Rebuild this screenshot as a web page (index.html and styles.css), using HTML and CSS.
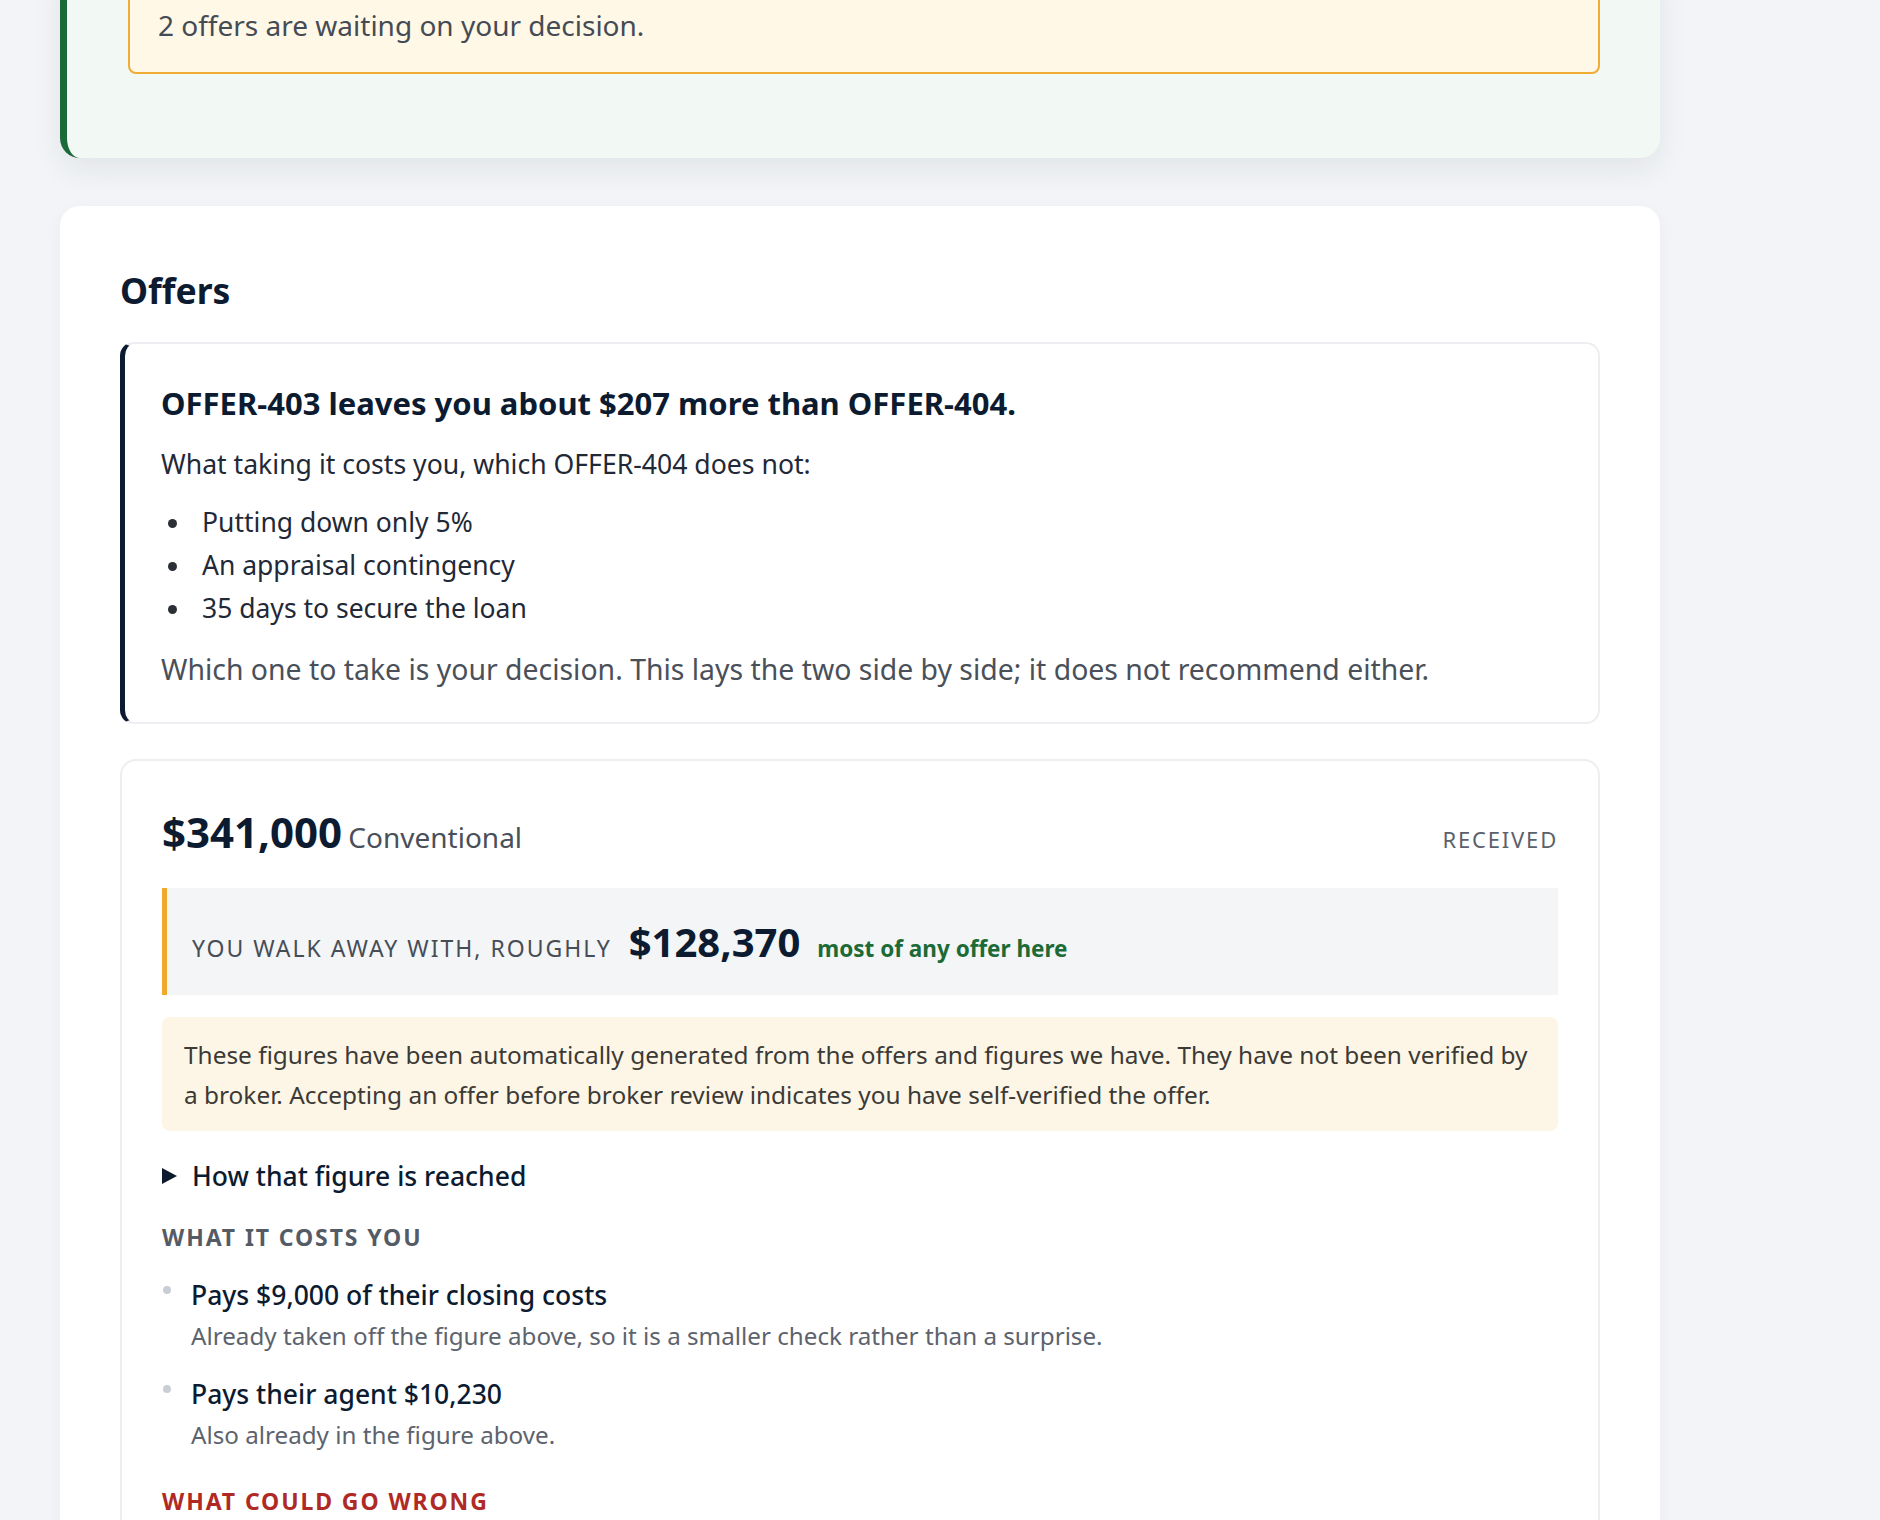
FILE: index.html
```html
<!DOCTYPE html>
<html lang="en">
<head>
<meta charset="utf-8">
<title>Offers</title>
<link rel="stylesheet" href="styles.css">
</head>
<body>
<main class="page">
  <section class="status-card">
    <div class="notice">2 offers are waiting on your decision.</div>
  </section>

  <section class="panel">
    <h2 class="panel-title">Offers</h2>

    <div class="summary">
      <h3 class="summary-head">OFFER-403 leaves you about $207 more than OFFER-404.</h3>
      <p class="summary-lead">What taking it costs you, which OFFER-404 does not:</p>
      <ul class="summary-list">
        <li>Putting down only 5%</li>
        <li>An appraisal contingency</li>
        <li>35 days to secure the loan</li>
      </ul>
      <p class="summary-note">Which one to take is your decision. This lays the two side by side; it does not recommend either.</p>
    </div>

    <article class="offer">
      <header class="offer-head">
        <div class="offer-price"><span class="price">$341,000</span> <span class="loan">Conventional</span></div>
        <span class="offer-status">RECEIVED</span>
      </header>

      <div class="net">
        <span class="net-label">YOU WALK AWAY WITH, ROUGHLY</span>
        <span class="net-value">$128,370</span>
        <span class="net-tag">most of any offer here</span>
      </div>

      <p class="disclaimer">These figures have been automatically generated from the offers and figures we have. They have not been verified by a broker. Accepting an offer before broker review indicates you have self-verified the offer.</p>

      <details class="breakdown">
        <summary>How that figure is reached</summary>
      </details>

      <h4 class="group-title">WHAT IT COSTS YOU</h4>
      <ul class="terms">
        <li>
          <div class="term-title">Pays $9,000 of their closing costs</div>
          <div class="term-note">Already taken off the figure above, so it is a smaller check rather than a surprise.</div>
        </li>
        <li>
          <div class="term-title">Pays their agent $10,230</div>
          <div class="term-note">Also already in the figure above.</div>
        </li>
      </ul>

      <h4 class="group-title risk">WHAT COULD GO WRONG</h4>
    </article>
  </section>
</main>
</body>
</html>
```

FILE: styles.css
```css
* { box-sizing: border-box; }

html, body {
  margin: 0;
  background: #f2f4f7;
}

body {
  font-family: "Noto Sans", "Open Sans", Arial, sans-serif;
  color: #1f2937;
}

.page {
  width: 1600px;
  margin: -43px 0 0 60px;
  display: flex;
  flex-direction: column;
  gap: 48px;
  padding-bottom: 80px;
}

/* status card at the top */
.status-card {
  background: #f2f8f4;
  border-left: 7px solid #1b6a37;
  border-radius: 20px;
  padding: 22px 60px 84px 61px;
  box-shadow: 0 12px 30px rgba(30, 40, 60, 0.07);
}

.notice {
  background: #fff8e7;
  border: 2px solid #f0ac35;
  border-radius: 8px;
  padding: 24px 28px 27px;
  font-size: 28px;
  line-height: 40px;
  color: #454b55;
}

/* offers panel */
.panel {
  background: #ffffff;
  border-radius: 20px;
  padding: 64px 60px 0;
  box-shadow: 0 4px 18px rgba(30, 40, 60, 0.04);
}

.panel-title {
  margin: 0 0 32px;
  font-size: 35.5px;
  line-height: 40px;
  font-weight: 700;
  color: #0c1b30;
}

.summary {
  border: 2px solid #eceef1;
  border-left: 5px solid #0c1b30;
  border-radius: 14px;
  padding: 40px 36px 33px;
}

.summary-head {
  margin: 0;
  font-size: 31px;
  line-height: 38px;
  font-weight: 700;
  color: #0c1b30;
}

.summary-lead {
  margin: 23px 0 0;
  font-size: 26.6px;
  line-height: 38px;
  color: #1f2937;
}

.summary-list {
  list-style: none;
  margin: 18px 0 0;
  padding: 0;
  font-size: 26.5px;
  line-height: 43px;
  color: #1f2937;
}

.summary-list li {
  position: relative;
  padding-left: 41px;
}

.summary-list li::before {
  content: "";
  position: absolute;
  left: 7px;
  top: 18px;
  width: 9px;
  height: 9px;
  border-radius: 50%;
  background: #2b2f36;
}

.summary-note {
  margin: 19px 0 0;
  font-size: 28.4px;
  line-height: 40px;
  color: #4a505a;
}

/* individual offer */
.offer {
  margin-top: 35px;
  border: 2px solid #eceef1;
  border-bottom: none;
  border-radius: 16px 16px 0 0;
  padding: 46px 40px 40px;
}

.offer-head {
  display: flex;
  align-items: baseline;
  justify-content: space-between;
}

.price {
  font-size: 42px;
  line-height: 50px;
  font-weight: 700;
  color: #0c1b30;
}

.loan {
  font-size: 28px;
  color: #4a505a;
  margin-left: 2px;
}

.offer-status {
  font-size: 22px;
  letter-spacing: 1.8px;
  color: #5b616b;
}

.net {
  margin-top: 31px;
  background: #f3f5f7;
  border-left: 5px solid #f0a92e;
  padding: 30px 25px 29px;
  display: flex;
  align-items: baseline;
  gap: 17px;
}

.net-label {
  font-size: 23px;
  letter-spacing: 2px;
  color: #474d57;
}

.net-value {
  font-size: 40px;
  line-height: 48px;
  font-weight: 700;
  color: #0c1b30;
}

.net-tag {
  font-size: 22.5px;
  font-weight: 700;
  color: #1c6b36;
}

.disclaimer {
  margin: 22px 0 0;
  background: #fdf6e6;
  border-radius: 8px;
  padding: 18px 24px 16px 22px;
  font-size: 24.4px;
  line-height: 40px;
  color: #3b3a36;
}

.breakdown {
  margin-top: 27px;
}

.breakdown summary {
  list-style: none;
  display: flex;
  align-items: center;
  gap: 15px;
  font-size: 26.5px;
  line-height: 36px;
  font-weight: 500;
  color: #0c1b30;
  cursor: pointer;
}

.breakdown summary::-webkit-details-marker { display: none; }

/* closed disclosure arrow */
.breakdown summary::before {
  content: "";
  width: 0;
  height: 0;
  border-left: 15px solid #0c1b30;
  border-top: 8.5px solid transparent;
  border-bottom: 8.5px solid transparent;
}

.group-title {
  margin: 28px 0 0;
  font-size: 23px;
  line-height: 30px;
  letter-spacing: 1.9px;
  font-weight: 700;
  color: #555b65;
}

.group-title.risk {
  margin-top: 35px;
  color: #b02a25;
}

.terms {
  list-style: none;
  margin: 25px 0 0;
  padding: 0;
}

.terms li {
  position: relative;
  padding-left: 29px;
  margin-bottom: 24px;
}

.terms li:last-child { margin-bottom: 0; }

.terms li::before {
  content: "";
  position: absolute;
  left: 1px;
  top: 9px;
  width: 8px;
  height: 8px;
  border-radius: 50%;
  background: #c9ced6;
}

.term-title {
  font-size: 26.5px;
  line-height: 36px;
  font-weight: 500;
  color: #0c1b30;
}

.term-note {
  margin-top: 7px;
  font-size: 24.2px;
  line-height: 32px;
  color: #5d636d;
}
```
